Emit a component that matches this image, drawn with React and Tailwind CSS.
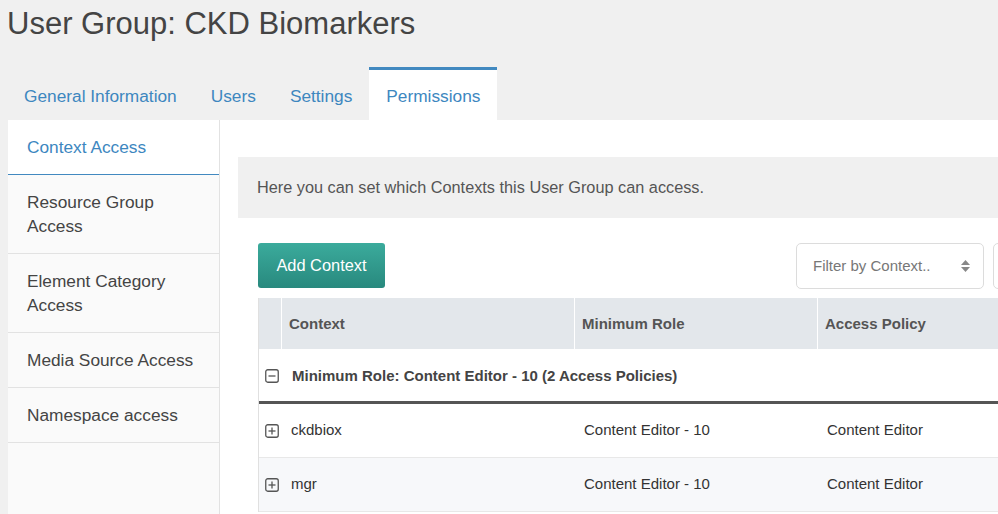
import React from 'react';

const tabs = ['General Information', 'Users', 'Settings', 'Permissions'];
const sideItems = ['Context Access', 'Resource Group Access', 'Element Category Access', 'Media Source Access', 'Namespace access'];
const rows = [
  { context: 'ckdbiox', role: 'Content Editor - 10', policy: 'Content Editor' },
  { context: 'mgr', role: 'Content Editor - 10', policy: 'Content Editor' },
];

function BoxIcon({ plus }) {
  return (
    <svg width="14" height="14" viewBox="0 0 14 14" className="shrink-0">
      <rect x="0.75" y="0.75" width="12.5" height="12.5" rx="2" fill="none" stroke="#555" strokeWidth="1.3" />
      <line x1="3.5" y1="7" x2="10.5" y2="7" stroke="#555" strokeWidth="1.3" />
      {plus && <line x1="7" y1="3.5" x2="7" y2="10.5" stroke="#555" strokeWidth="1.3" />}
    </svg>
  );
}

export default function App() {
  return (
    <div className="w-[998px] h-[514px] overflow-hidden bg-[#f0f0f0] font-['Liberation_Sans',Arial,sans-serif]">
      {/* Titre */}
      <div className="h-[67px] pl-[7px] pt-[8px]">
        <h1 className="text-[31px] leading-none text-[#444] whitespace-nowrap">User Group: CKD Biomarkers</h1>
      </div>

      {/* Onglets */}
      <div className="flex h-[53px] pl-[7px]">
        {tabs.map((t) => {
          const active = t === 'Permissions';
          return (
            <div
              key={t}
              className={`px-[17px] pt-[14px] border-t-[3px] text-[17.3px] leading-[24px] whitespace-nowrap text-[#3d87bf] ${
                active ? 'bg-white border-[#4289c0]' : 'border-transparent'
              }`}
            >
              {t}
            </div>
          );
        })}
      </div>

      {/* Panneau */}
      <div className="ml-[8px] h-[394px] bg-white flex">
        <div className="w-[212px] shrink-0 bg-[#fafafa] border-r border-[#e2e2e2]">
          {sideItems.map((s, i) => (
            <div
              key={s}
              className={`pl-[19px] pr-[19px] pt-[15px] pb-[15px] text-[17.3px] leading-[24px] ${
                i === 0 ? 'bg-white text-[#3d87bf] border-b border-[#4289c0]' : 'text-[#444] border-b border-[#e2e2e2]'
              }`}
            >
              {s}
            </div>
          ))}
        </div>

        <div className="flex-1 min-w-0 pl-[18px] pt-[37px]">
          <div className="h-[61px] bg-[#f0f0f0] pl-[19px] pt-[18px] text-[16.3px] leading-[24px] text-[#555] whitespace-nowrap">
            Here you can set which Contexts this User Group can access.
          </div>

          <div className="pl-[20px] pt-[25px]">
            <div className="flex items-start h-[46px]">
              <button className="w-[127px] h-[45px] shrink-0 whitespace-nowrap rounded-[3px] bg-gradient-to-b from-[#3bab9c] to-[#28897e] text-white text-[16.4px] flex items-center justify-center">
                Add Context
              </button>
              <div className="ml-[411px] w-[188px] h-[46px] shrink-0 border border-[#dcdcdc] rounded-[5px] flex items-center justify-between pl-[16px] pr-[12px] text-[15px] text-[#777]">
                <span className="whitespace-nowrap">Filter by Context..</span>
                <svg width="11" height="14" viewBox="0 0 11 14">
                  <path d="M5.5 1 L10 6 L1 6 Z" fill="#888" />
                  <path d="M5.5 13 L10 8 L1 8 Z" fill="#888" />
                </svg>
              </div>
              <div className="ml-[9px] w-[40px] h-[46px] shrink-0 border border-[#dcdcdc] rounded-[5px]"></div>
            </div>

            <div className="mt-[9px] border-l border-[#e0e0e0] text-[15px]">
              <div className="grid grid-cols-[23px_293px_243px_1fr] h-[51px] bg-[#e3e7eb] font-bold text-[#555]">
                <div className="border-r border-white"></div>
                <div className="border-r border-white flex items-center px-[7px] pt-[2px]">Context</div>
                <div className="border-r border-white flex items-center px-[7px] pt-[2px]">Minimum Role</div>
                <div className="flex items-center px-[7px] pt-[2px] whitespace-nowrap">Access Policy</div>
              </div>

              <div className="h-[55px] flex items-center pl-[6px] pt-[2px] border-b-[3px] border-[#555] font-bold text-[#444]">
                <BoxIcon />
                <span className="ml-[13px] whitespace-nowrap">Minimum Role: Content Editor - 10 (2 Access Policies)</span>
              </div>

              {rows.map((r, i) => (
                <div
                  key={r.context}
                  className={`grid grid-cols-[23px_293px_243px_1fr] h-[54px] border-b border-[#e8e8e8] text-[#333] ${
                    i % 2 ? 'bg-[#f7f8fa]' : 'bg-white'
                  }`}
                >
                  <div className="flex items-center pl-[6px]">
                    <BoxIcon plus />
                  </div>
                  <div className="flex items-center px-[9px]">{r.context}</div>
                  <div className="flex items-center px-[9px] whitespace-nowrap">{r.role}</div>
                  <div className="flex items-center px-[9px] whitespace-nowrap">{r.policy}</div>
                </div>
              ))}
            </div>
          </div>
        </div>
      </div>
    </div>
  );
}
